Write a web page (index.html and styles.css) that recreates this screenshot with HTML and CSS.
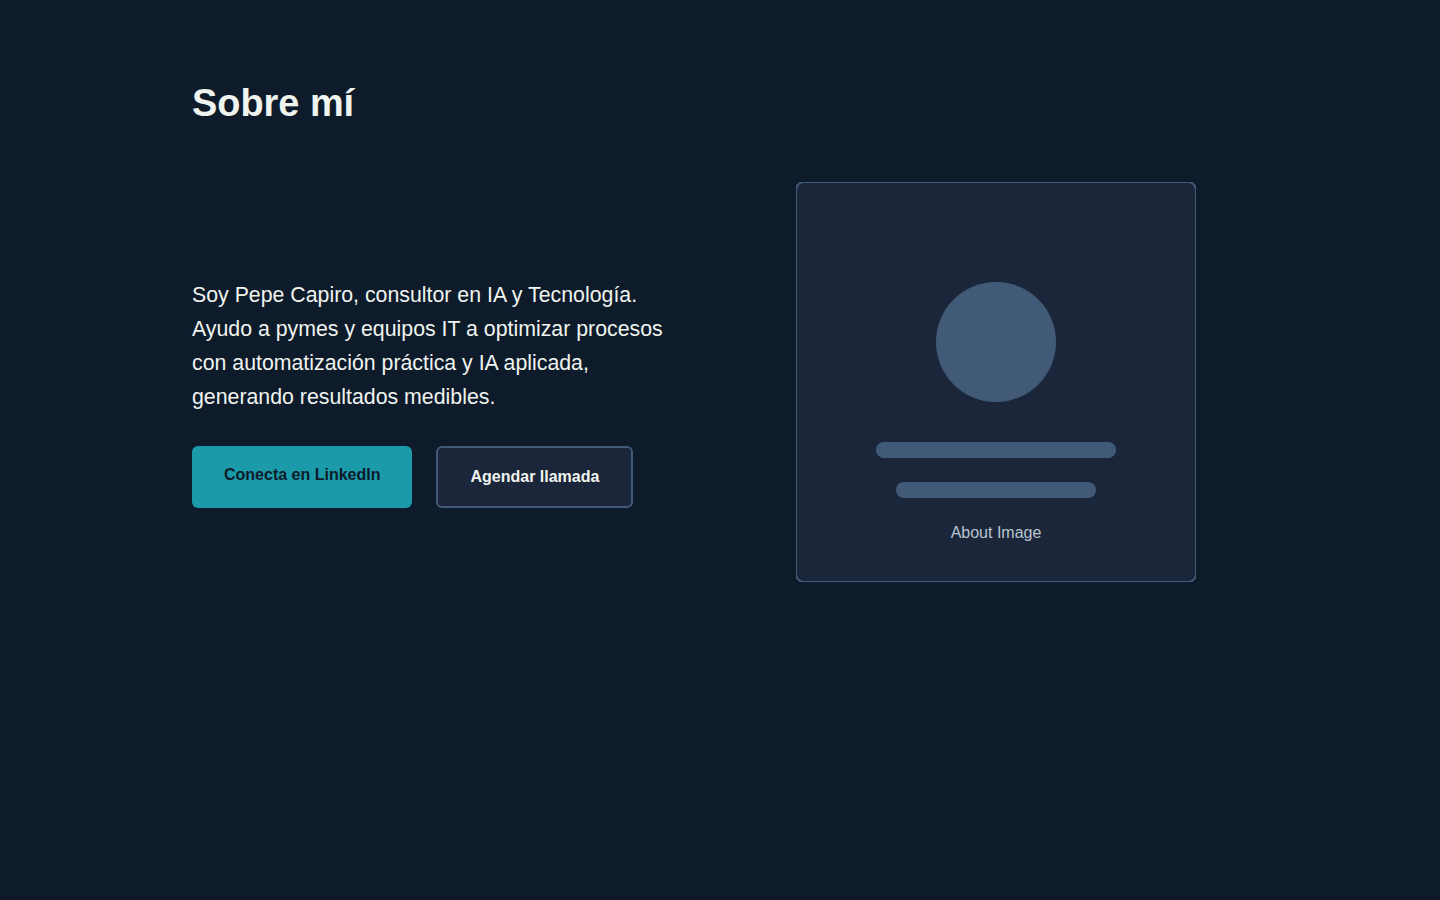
FILE: index.html
```html
<!DOCTYPE html>
<html lang="es">
<head>
<meta charset="utf-8">
<title>Sobre mí</title>
<link rel="stylesheet" href="styles.css">
</head>
<body>
<section class="about">
  <div class="container">
    <h1 class="title">Sobre mí</h1>
    <div class="grid">
      <div class="content">
        <p class="bio">Soy Pepe Capiro, consultor en IA y Tecnología. Ayudo a pymes y equipos IT a optimizar procesos con automatización práctica y IA aplicada, generando resultados medibles.</p>
        <div class="actions">
          <a class="btn btn-primary">Conecta en LinkedIn</a>
          <a class="btn btn-secondary">Agendar llamada</a>
        </div>
      </div>
      <div class="media">
        <svg class="picture" width="400" height="400" viewBox="0 0 400 400">
          <rect width="400" height="400" rx="8" fill="#1b263b" stroke="#415a77" stroke-width="2"/>
          <circle cx="200" cy="160" r="60" fill="#415a77"/>
          <rect x="80" y="260" width="240" height="16" rx="8" fill="#415a77"/>
          <rect x="100" y="300" width="200" height="16" rx="8" fill="#415a77"/>
          <text class="caption" x="200" y="356" text-anchor="middle">About Image</text>
        </svg>
      </div>
    </div>
  </div>
</section>
</body>
</html>
```
FILE: styles.css
```css
* { box-sizing: border-box; }
body {
  margin: 0;
  background: #0f172a;
  color: #f0f4ef;
  font-family: "Liberation Sans", Arial, sans-serif;
}
.about {
  height: 896px;
  padding: 80px 0;
  background: #0d1b2a;
}
.container {
  width: 1056px;
  margin: 0 auto;
}
.title {
  margin: 0 0 56px;
  font-size: 37.9px;
  line-height: 46px;
  font-weight: 700;
}
.grid {
  display: grid;
  grid-template-columns: 1fr 1fr;
  gap: 48px;
  align-items: center;
}
.content {
  padding-top: 22px;
}
.bio {
  max-width: 480px;
  margin: 0 0 32px;
  font-size: 21.328px;
  line-height: 34px;
}
.actions {
  display: flex;
  gap: 24px;
}
.btn {
  padding: 16px 32px;
  border-radius: 6px;
  font-size: 16px;
  line-height: 26px;
  font-weight: 700;
}
.btn-primary {
  background: #1b9aaa;
  color: #0d1b2a;
}
.btn-secondary {
  border: 2px solid #415a77;
  background: #1b263b;
}
.media {
  display: flex;
  justify-content: center;
}
.picture {
  display: block;
}
.caption {
  fill: #b8c5d0;
  font-size: 16px;
}
```
